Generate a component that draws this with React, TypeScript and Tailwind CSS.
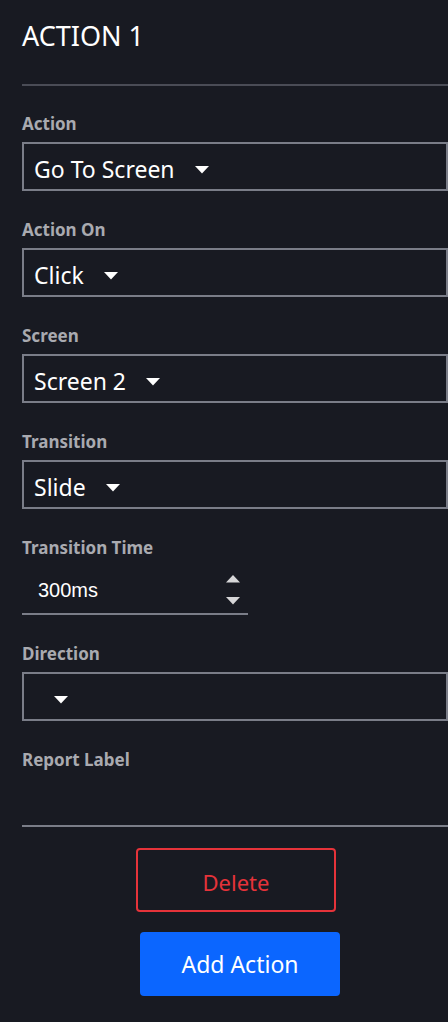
import React from 'react';

const Caret: React.FC<{ className?: string }> = ({ className = '' }) => (
  <svg width="14" height="8" viewBox="0 0 14 8" className={className}>
    <path d="M0 0 H14 L7 7.5 Z" fill="#ffffff" />
  </svg>
);

const FieldLabel: React.FC<{ children: React.ReactNode }> = ({ children }) => (
  <div className="h-[28px] text-[17px] leading-[28px] font-bold text-[#a9aab0] mb-1">{children}</div>
);

const SelectField: React.FC<{ label: string; value: string }> = ({ label, value }) => (
  <div className="mb-[25px]">
    <FieldLabel>{label}</FieldLabel>
    <div className="h-[49px] border-2 border-[#7a7d88] flex items-center pl-[10px] pt-[5px]">
      {value && <span className="text-[23px] text-white leading-none">{value}</span>}
      <Caret className="ml-[20px] mt-[2px]" />
    </div>
  </div>
);

export default function App() {
  const fields = [
    { label: 'Action', value: 'Go To Screen' },
    { label: 'Action On', value: 'Click' },
    { label: 'Screen', value: 'Screen 2' },
    { label: 'Transition', value: 'Slide' },
  ];

  return (
    <div
      className="min-h-screen w-full bg-[#181a22] pl-[22px] pb-6"
      style={{ fontFamily: '"Noto Sans", "Open Sans", sans-serif' }}
    >
      <div className="pt-[18px] h-[84px]">
        <h1 className="text-[27px] leading-[36px] text-white font-normal">ACTION 1</h1>
      </div>
      <div className="h-[2px] bg-[#4a4c56]" />

      <div className="pt-6">
        {fields.map((f) => (
          <SelectField key={f.label} label={f.label} value={f.value} />
        ))}

        <div className="mb-[25px]">
          <FieldLabel>Transition Time</FieldLabel>
          <div className="w-[226px] h-[49px] border-b-2 border-[#7a7d88] flex items-center justify-between pl-4 pr-2">
            <span className="text-[20px] text-white" style={{ fontFamily: '"Liberation Sans", Arial, sans-serif' }}>
              300ms
            </span>
            <div className="flex flex-col gap-[14px]">
              <svg width="14" height="8" viewBox="0 0 14 8">
                <path d="M0 7.5 H14 L7 0 Z" fill="#d6d6d8" />
              </svg>
              <svg width="14" height="8" viewBox="0 0 14 8">
                <path d="M0 0 H14 L7 7.5 Z" fill="#d6d6d8" />
              </svg>
            </div>
          </div>
        </div>

        <SelectField label="Direction" value="" />

        <div>
          <FieldLabel>Report Label</FieldLabel>
          <div className="h-[49px] border-b-2 border-[#7a7d88]" />
        </div>
      </div>

      <div className="pt-[21px] flex flex-col">
        <button className="ml-[114px] w-[200px] h-[64px] border-2 border-[#e5333a] rounded-[4px] text-[22px] text-[#e5333a] pt-1">
          Delete
        </button>
        <button className="ml-[118px] mt-[20px] w-[200px] h-[64px] bg-[#0b66ff] rounded-[4px] text-[23px] text-white">
          Add Action
        </button>
      </div>
    </div>
  );
}
